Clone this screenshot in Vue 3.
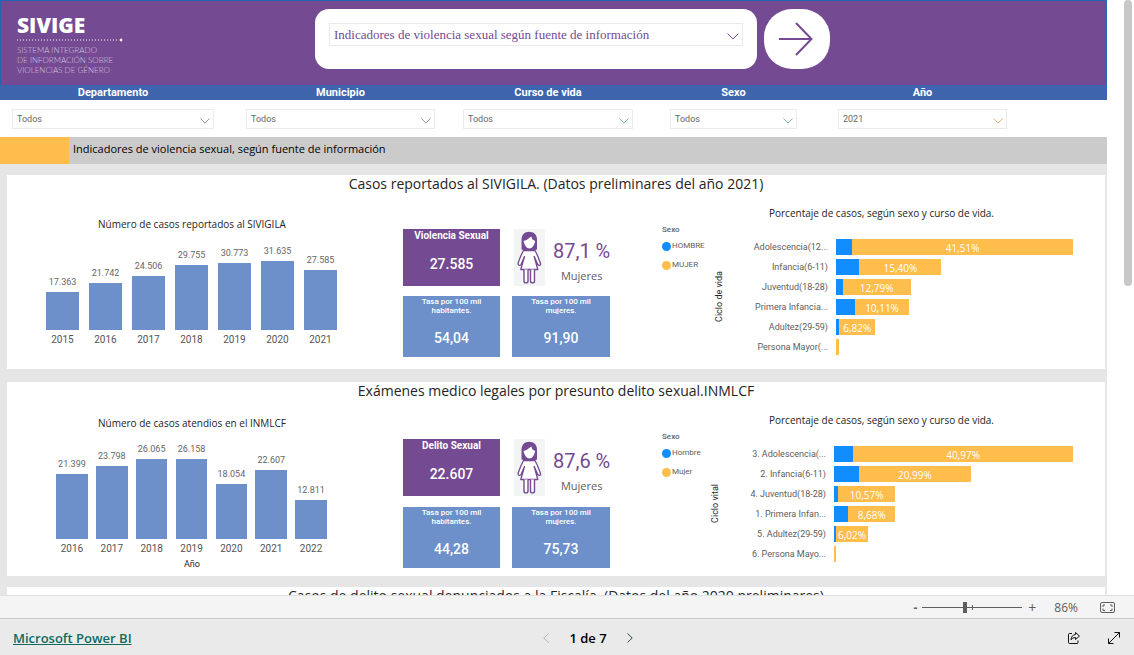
<script setup>
import { ref } from 'vue'

const topic = ref('Indicadores de violencia sexual según fuente de información')
const zoom = ref(86)

const filters = [
  { id: 'departamento', label: 'Departamento', value: 'Todos', color: '#7b7f86' },
  { id: 'municipio', label: 'Municipio', value: 'Todos', color: '#7b7f86' },
  { id: 'curso', label: 'Curso de vida', value: 'Todos', color: '#5f9ea0' },
  { id: 'sexo', label: 'Sexo', value: 'Todos', color: '#5f9ea0' },
  { id: 'anio', label: 'Año', value: '2021', color: '#d9a35b' },
]

const panels = [
  {
    id: 'sivigila',
    title: 'Casos reportados al SIVIGILA. (Datos preliminares del año 2021)',
    barsTitle: 'Número de casos reportados al SIVIGILA',
    perPixel: 458,
    bars: [
      ['2015', '17.363'], ['2016', '21.742'], ['2017', '24.506'], ['2018', '29.755'],
      ['2019', '30.773'], ['2020', '31.635'], ['2021', '27.585'],
    ],
    barsAxis: '',
    totalLabel: 'Violencia Sexual',
    total: '27.585',
    women: '87,1 %',
    rateAll: '54,04',
    rateWomen: '91,90',
    legend: ['HOMBRE', 'MUJER'],
    axis: 'Ciclo de vida',
    groups: [
      { name: 'Adolescencia(12...', men: 3.05, women: 41.51, text: '41,51%' },
      { name: 'Infancia(6-11)', men: 4.4, women: 15.4, text: '15,40%' },
      { name: 'Juventud(18-28)', men: 1.25, women: 12.79, text: '12,79%' },
      { name: 'Primera Infancia...', men: 3.6, women: 10.11, text: '10,11%' },
      { name: 'Adultez(29-59)', men: 0.6, women: 6.82, text: '6,82%' },
      { name: 'Persona Mayor(...', men: 0, women: 0.55, text: '' },
    ],
  },
  {
    id: 'inmlcf',
    title: 'Exámenes medico legales por presunto delito sexual.INMLCF',
    barsTitle: 'Número de casos atendios en el INMLCF',
    perPixel: 327,
    bars: [
      ['2016', '21.399'], ['2017', '23.798'], ['2018', '26.065'], ['2019', '26.158'],
      ['2020', '18.054'], ['2021', '22.607'], ['2022', '12.811'],
    ],
    barsAxis: 'Año',
    totalLabel: 'Delito Sexual',
    total: '22.607',
    women: '87,6 %',
    rateAll: '44,28',
    rateWomen: '75,73',
    legend: ['Hombre', 'Mujer'],
    axis: 'Ciclo vital',
    groups: [
      { name: '3. Adolescencia(...', men: 3.6, women: 40.97, text: '40,97%' },
      { name: '2. Infancia(6-11)', men: 4.6, women: 20.99, text: '20,99%' },
      { name: '4. Juventud(18-28)', men: 0.8, women: 10.57, text: '10,57%' },
      { name: '1. Primera Infan...', men: 2.7, women: 8.68, text: '8,68%' },
      { name: '5. Adultez(29-59)', men: 0.35, women: 6.02, text: '6,02%' },
      { name: '6. Persona Mayo...', men: 0, women: 0.4, text: '' },
    ],
  },
]

const barHeight = (text, perPixel) =>
  Math.round(Number(text.replace('.', '')) / perPixel) + 'px'

const share = (value) => (value / 44.57) * 100 + '%'
</script>

<template>
  <div class="viewer">
    <div class="viewport">
      <main class="report">
        <header class="top">
          <div class="brand">
            <strong class="brand-name">SIVIGE</strong>
            <svg class="brand-rule" viewBox="0 0 106 4">
              <path d="M0 2H102" stroke-dasharray="1 2" />
              <circle cx="104" cy="2" r="1" fill="#fff" />
            </svg>
            <span class="brand-text">SISTEMA INTEGRADO<br />DE INFORMACIÓN SOBRE<br />VIOLENCIAS DE GÉNERO</span>
          </div>
          <div class="topic-card">
            <div class="select-wrap topic">
              <select v-model="topic" aria-label="Tema">
                <option>Indicadores de violencia sexual según fuente de información</option>
              </select>
              <svg class="chevron" viewBox="0 0 12 7"><path d="M.5 .5 6 6 11.5 .5" /></svg>
            </div>
          </div>
          <button class="go" type="button" aria-label="Ir">
            <svg viewBox="0 0 36 36"><path d="M1 18H33M18 2 33.500 18 18 34" /></svg>
          </button>
        </header>

        <div class="filter-grid filter-heads">
          <label v-for="f in filters" :key="f.id" :for="f.id">{{ f.label }}</label>
        </div>
        <div class="filter-grid filter-fields">
          <div v-for="f in filters" :key="f.id" class="select-wrap">
            <select :id="f.id">
              <option>{{ f.value }}</option>
            </select>
            <svg class="chevron" viewBox="0 0 12 7" :style="{ color: f.color }"><path d="M.5 .5 6 6 11.5 .5" /></svg>
          </div>
        </div>

        <div class="banner">
          <h1>Indicadores de violencia sexual, según fuente de información</h1>
        </div>

        <section v-for="p in panels" :key="p.id" class="panel" :class="p.id">
          <h2>{{ p.title }}</h2>
          <div class="columns">
            <div class="yearly">
              <h3>{{ p.barsTitle }}</h3>
              <div class="bars">
                <div v-for="b in p.bars" :key="b[0]" class="bar-item">
                  <span class="bar-value">{{ b[1] }}</span>
                  <span class="bar" :style="{ height: barHeight(b[1], p.perPixel) }"></span>
                  <span class="bar-year">{{ b[0] }}</span>
                </div>
              </div>
              <div v-if="p.barsAxis" class="bars-axis">{{ p.barsAxis }}</div>
            </div>

            <div class="kpis">
              <div class="tile total">
                <span class="tile-head">{{ p.totalLabel }}</span>
                <b>{{ p.total }}</b>
              </div>
              <div class="women">
                <svg class="figure" viewBox="0 0 31 57">
                  <rect width="31" height="57" fill="#f3f4f4" />
                  <path d="M7.500 20.500V10.500C7.500 5.500 11 2.800 15.200 2.800S23 5.500 23 10.500V20.500Q15.200 23 7.500 20.500Z" fill="#744a92" />
                  <path d="M9.500 12 12.500 11 17.300 7.500 18.500 10.500 21.200 12C20.500 16 18 19.500 15.400 19.500S10.300 16 9.500 12Z" fill="#fff" />
                  <path d="M9.500 21.500C7.500 25 5.500 30 4 34.500C4 36.500 6 37 7 35.500L10.500 27.500 6.800 40.500H23.800L20.200 27.500 23.800 35.500C25 37 27 36.500 26.500 34.500C25 30 23 25 21 21.500Z" fill="#fff" stroke="#744a92" stroke-width="1.300" stroke-linejoin="round" />
                  <path d="M10 40.500V52C10 54.500 14 54.500 14 52V40.500M16.500 40.500V52C16.500 54.500 20.500 54.500 20.500 52V40.500" fill="#fff" stroke="#744a92" stroke-width="1.400" />
                </svg>
                <div class="women-text">
                  <span class="women-share">{{ p.women }}</span>
                  <span class="women-label">Mujeres</span>
                </div>
              </div>
              <div class="tile rate">
                <span class="tile-note">Tasa por 100 mil habitantes.</span>
                <b>{{ p.rateAll }}</b>
              </div>
              <div class="tile rate">
                <span class="tile-note">Tasa por 100 mil mujeres.</span>
                <b>{{ p.rateWomen }}</b>
              </div>
            </div>

            <div class="by-sex">
              <h3>Porcentaje de casos, según sexo y curso de vida.</h3>
              <div class="by-sex-body">
                <div class="legend">
                  <b>Sexo</b>
                  <span><i class="dot men"></i>{{ p.legend[0] }}</span>
                  <span><i class="dot women-dot"></i>{{ p.legend[1] }}</span>
                </div>
                <div class="axis-name">{{ p.axis }}</div>
                <div class="groups">
                  <div v-for="g in p.groups" :key="g.name" class="group">
                    <span class="group-name">{{ g.name }}</span>
                    <span class="track">
                      <span class="seg seg-men" :style="{ width: share(g.men) }"></span>
                      <span class="seg seg-women" :style="{ width: share(g.women) }">{{ g.text }}</span>
                    </span>
                  </div>
                </div>
              </div>
            </div>
          </div>
        </section>

        <section class="panel next">
          <h2>Casos de delito sexual denunciados a la Fiscalía. (Datos del año 2020 preliminares)</h2>
        </section>
      </main>
      <div class="scroll"><div class="thumb"></div></div>
    </div>

    <div class="zoombar">
      <button type="button" class="minus" aria-label="Alejar">-</button>
      <div class="slider">
        <input v-model="zoom" type="range" min="10" max="190" aria-label="Zoom" />
      </div>
      <button type="button" class="plus" aria-label="Acercar">+</button>
      <span class="percent">{{ zoom }}%</span>
      <button type="button" class="fit" aria-label="Ajustar a la página">
        <svg viewBox="0 0 15 11"><rect x=".5" y=".5" width="14" height="10" rx="1.500" /><path d="M5 3H3V5M3 6.500V8.500H5M10 3H12V5M12 6.500V8.500H10" /></svg>
      </button>
    </div>

    <footer class="footer">
      <a href="#">Microsoft Power BI</a>
      <nav class="pager">
        <button type="button" class="prev" aria-label="Página anterior">
          <svg viewBox="0 0 6 10"><path d="M5.500 .5 .8 5 5.500 9.500" /></svg>
        </button>
        <span>1 de 7</span>
        <button type="button" class="following" aria-label="Página siguiente">
          <svg viewBox="0 0 6 10"><path d="M.5 .5 5.200 5 .5 9.500" /></svg>
        </button>
      </nav>
      <div class="actions">
        <button type="button" aria-label="Compartir">
          <svg viewBox="0 0 14 14"><path d="M5 2.500H2.500Q1.500 2.500 1.500 3.500V11.500Q1.500 12.500 2.500 12.500H10Q11 12.500 11 11.500V9.500M8.500 1.500 12.500 5 8.500 8.500V6.500Q5.500 6.300 4 8.800Q4.300 4 8.500 3.500Z" /></svg>
        </button>
        <button type="button" aria-label="Pantalla completa">
          <svg viewBox="0 0 14 14"><path d="M1.500 12.500 12.500 1.500M7.500 1.500H12.500V6.500M1.500 7.500V12.500H6.500" /></svg>
        </button>
      </div>
    </footer>
  </div>
</template>

<style>
body {
  margin: 0;
}
</style>

<style scoped>
.viewer {
  --purple: #744a92;
  --blue: #6d8fca;
  --amber: #ffbd4c;
  display: flex;
  flex-direction: column;
  height: 100vh;
  overflow: hidden;
  font-family: Roboto, sans-serif;
  color: #252423;
  background: #fff;
}
*,
*::before,
*::after {
  box-sizing: border-box;
}
h1, h2, h3 {
  margin: 0;
  font-weight: 400;
}
button {
  padding: 0;
  border: 0;
  background: none;
  font: inherit;
  color: inherit;
}
svg {
  display: block;
  fill: none;
  stroke: currentColor;
}
.figure {
  stroke: none;
}
.viewport {
  display: flex;
  flex: 1;
  min-height: 0;
  overflow: hidden;
}
.report {
  flex: 1;
  min-width: 0;
  background: #e6e6e6;
}
.scroll {
  width: 27px;
  padding-left: 17px;
}
.thumb {
  width: 8px;
  height: 48%;
  border-radius: 4px;
  background: #c8c8c8;
}

.top {
  display: flex;
  height: 85px;
  padding: 8px 16px 0;
  border: 1px solid #2265b5;
  border-bottom: 0;
  background: var(--purple);
}
.brand {
  display: flex;
  flex-direction: column;
  width: 298px;
  padding-top: 5px;
  color: #fff;
  font-family: Lato, sans-serif;
}
.brand-name {
  font-family: "Open Sans", Lato, sans-serif;
  font-size: 21px;
  font-weight: 800;
  line-height: 22px;
  padding-bottom: 2px;
}
.brand-rule {
  width: 106px;
  height: 4px;
}
.brand-text {
  margin-top: 3px;
  font-size: 8px;
  font-weight: 300;
  line-height: 10px;
  color: #d5c6e0;
}
.topic-card {
  width: 442px;
  height: 60px;
  padding: 14px;
  border-radius: 14px;
  background: #fff;
}
.go {
  display: flex;
  align-items: center;
  justify-content: center;
  width: 66px;
  height: 60px;
  margin-left: 7px;
  padding-right: 2px;
  border-radius: 28px;
  background: #fff;
  color: var(--purple);
}
.go svg {
  width: 36px;
  height: 36px;
  stroke-width: 2;
}
.select-wrap {
  position: relative;
}
select {
  display: block;
  width: 100%;
  height: 20px;
  padding: 0 4px;
  border: 1px solid #ebebeb;
  border-radius: 0;
  appearance: none;
  background: #fff;
  color: #666;
  font-family: Roboto, sans-serif;
  font-size: 9px;
}
.chevron {
  position: absolute;
  top: 9px;
  right: 4px;
  width: 10px;
  height: 6px;
  pointer-events: none;
}
.topic {
  color: var(--purple);
}
.topic select {
  height: 23px;
  color: var(--purple);
  font-family: "Liberation Serif", serif;
  font-size: 13px;
}
.topic .chevron {
  top: 10px;
  width: 12px;
  height: 7px;
}
.filter-grid {
  display: grid;
  grid-template-columns: 12fr 202fr 32fr 189fr 28fr 170fr 37fr 127fr 41fr 169fr 100fr;
}
.filter-grid > :nth-child(1) { grid-column: 2; }
.filter-grid > :nth-child(2) { grid-column: 4; }
.filter-grid > :nth-child(3) { grid-column: 6; }
.filter-grid > :nth-child(4) { grid-column: 8; }
.filter-grid > :nth-child(5) { grid-column: 10; }
.filter-heads {
  background: #3d64ad;
  color: #fff;
  font-size: 11px;
  font-weight: 700;
  line-height: 15px;
  text-align: center;
}
.filter-fields {
  padding: 9px 0 8px;
  background: #fff;
}
.banner {
  padding-left: 73px;
  background: linear-gradient(to right, var(--amber) 69px, #cbcbcb 69px);
}
.banner h1 {
  color: #000;
  font-family: "Open Sans", sans-serif;
  font-size: 11px;
  line-height: 24px;
  padding-bottom: 3px;
}

.panel {
  height: 194px;
  margin: 11px 2px 13px 7px;
  background: #fff;
}
.panel.inmlcf {
  margin-bottom: 11px;
}
.panel h2 {
  font-family: "Open Sans", sans-serif;
  font-size: 14px;
  line-height: 18px;
  text-align: center;
}
.panel.next {
  height: 60px;
}
.columns {
  display: grid;
  grid-template-columns: 370fr 259fr 469fr;
}
h3 {
  font-family: "Open Sans", sans-serif;
  font-size: 10px;
  line-height: 14px;
  text-align: center;
}
.yearly {
  display: flex;
  flex-direction: column;
  padding-top: 24px;
}
.bars {
  display: flex;
  align-items: flex-end;
  height: 115px;
  padding: 0 35px 0 34px;
}
.inmlcf .yearly {
  padding-top: 16px;
}
.inmlcf .bars {
  height: 125px;
  padding: 0 46px 0 45px;
}
.bar-item {
  display: flex;
  flex: 1;
  flex-direction: column;
  align-items: center;
}
.bar {
  width: 79%;
  background: var(--blue);
}
.bar-value {
  margin-bottom: 4px;
  color: #666;
  font-size: 9px;
  line-height: 12px;
}
.bar-year {
  padding-top: 4px;
  color: #555;
  font-size: 10px;
  line-height: 12px;
}
.bars-axis {
  padding-top: 3px;
  font-size: 9px;
  line-height: 12px;
  text-align: center;
}

.kpis {
  display: grid;
  grid-template-columns: 97px 98px;
  grid-template-rows: 57px 61px;
  gap: 10px 12px;
  justify-content: center;
  padding-top: 36px;
}
.inmlcf .kpis {
  row-gap: 11px;
  padding-top: 39px;
}
.tile {
  display: flex;
  flex-direction: column;
  align-items: center;
  color: #fff;
  text-align: center;
  background: var(--blue);
}
.tile b {
  font-size: 14px;
  font-weight: 500;
  line-height: 16px;
}
.total {
  background: var(--purple);
}
.tile-head {
  margin-bottom: 13px;
  font-size: 10px;
  font-weight: 700;
  line-height: 14px;
}
.tile-note {
  width: 72px;
  margin: 1px 0 15px;
  font-size: 8px;
  font-weight: 500;
  line-height: 9px;
}
.women {
  display: flex;
  gap: 8px;
  padding-left: 2px;
}
.figure {
  flex: none;
  width: 31px;
  height: 57px;
}
.women-text {
  display: flex;
  flex-direction: column;
  align-items: center;
  padding-top: 10px;
  white-space: nowrap;
}
.women-share {
  color: var(--purple);
  font-size: 20px;
  line-height: 24px;
}
.women-label {
  color: #605e5c;
  font-family: "Open Sans", sans-serif;
  font-size: 11px;
  line-height: 26px;
}

.by-sex {
  padding: 13px 32px 0 26px;
}
.by-sex h3 {
  margin-right: -28px;
}
.by-sex-body {
  display: flex;
}
.legend {
  display: flex;
  flex-direction: column;
  flex: none;
  gap: 7px;
  width: 50px;
  padding-top: 4px;
  color: #605e5c;
  font-size: 8px;
  line-height: 12px;
}
.inmlcf .legend {
  width: 46px;
}
.legend b {
  margin-bottom: -3px;
  font-weight: 500;
}
.legend span {
  display: flex;
  align-items: center;
  gap: 1px;
}
.dot {
  flex: none;
  width: 9px;
  height: 9px;
  border-radius: 50%;
}
.men,
.seg-men {
  background: #118dff;
}
.women-dot,
.seg-women {
  background: var(--amber);
}
.axis-name {
  align-self: center;
  width: 16px;
  padding-bottom: 18px;
  font-size: 9px;
  line-height: 14px;
  writing-mode: vertical-rl;
  transform: rotate(180deg);
}
.groups {
  display: flex;
  flex: 1;
  flex-direction: column;
  gap: 4px;
  padding-top: 19px;
}
.group {
  display: flex;
  height: 16px;
}
.group-name {
  width: 100px;
  flex: none;
  color: #605e5c;
  font-size: 9px;
  line-height: 16px;
  text-align: right;
  white-space: nowrap;
}
.inmlcf .group-name {
  width: 102px;
}
.track {
  display: flex;
  flex: 1;
  margin-left: 8px;
}
.seg {
  display: block;
  flex: none;
}
.seg-women {
  overflow: hidden;
  color: #fff;
  font-family: "Open Sans", sans-serif;
  font-size: 10px;
  line-height: 19px;
  text-align: center;
}

.zoombar {
  display: flex;
  flex: none;
  align-items: center;
  justify-content: flex-end;
  height: 23px;
  padding-right: 19px;
  border-top: 1px solid #e0e0e0;
  background: #f4f4f4;
  color: #605e5c;
  font-family: "Open Sans", sans-serif;
  font-size: 12px;
}
.slider {
  position: relative;
  display: flex;
  width: 100px;
  margin: 0 5px;
}
.slider::after {
  content: "";
  position: absolute;
  top: 3px;
  left: 50%;
  width: 1px;
  height: 5px;
  background: #605e5c;
}
.slider input {
  width: 100%;
  height: 11px;
  margin: 0;
  appearance: none;
  background: linear-gradient(#605e5c, #605e5c) center / 100% 1px no-repeat;
}
.slider input::-webkit-slider-thumb {
  width: 4px;
  height: 11px;
  appearance: none;
  background: #605e5c;
}
.minus {
  font-weight: 700;
}
.plus {
  width: 10px;
  font-size: 14px;
}
.percent {
  margin: 0 22px 0 17px;
}
.fit svg {
  width: 15px;
  height: 11px;
}
.footer {
  display: grid;
  grid-template-columns: 1fr auto 1fr;
  flex: none;
  align-items: center;
  height: 37px;
  padding: 2px 13px 0;
  border-top: 1px solid #c8c8c8;
  background: #eaeaea;
  font-family: "Open Sans", sans-serif;
}
.footer a {
  justify-self: start;
  color: #0f6a5f;
  font-size: 13px;
  font-weight: 600;
  line-height: 20px;
}
.pager {
  display: flex;
  align-items: center;
  gap: 20px;
  margin-left: 42px;
  color: #000;
  font-size: 13px;
  font-weight: 600;
}
.pager svg {
  width: 6px;
  height: 10px;
}
.prev {
  color: #b5b5b5;
}
.following {
  color: #1f4f4a;
}
.actions {
  display: flex;
  gap: 26px;
  justify-self: end;
  color: #111;
}
.actions svg {
  width: 14px;
  height: 14px;
}
</style>
